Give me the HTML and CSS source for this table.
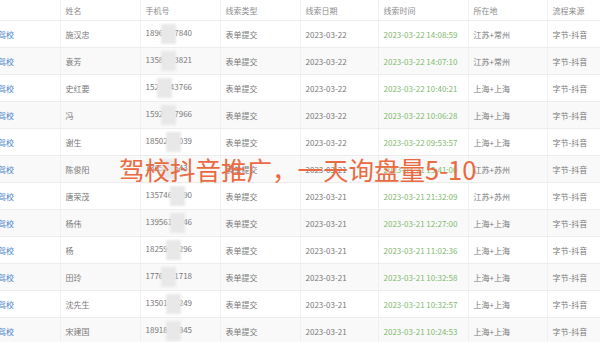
FILE: index.html
```html
<!DOCTYPE html>
<html lang="zh">
<head>
<meta charset="utf-8">
<link rel="stylesheet" href="styles.css">
</head>
<body>
<div class="page">
  <table class="grid">
    <colgroup>
      <col class="c-org"><col class="c-name"><col class="c-phone"><col class="c-type"><col class="c-date"><col class="c-time"><col class="c-loc"><col class="c-src">
    </colgroup>
    <thead>
      <tr><th></th><th>姓名</th><th>手机号</th><th>线索类型</th><th>线索日期</th><th>线索时间</th><th>所在地</th><th>流程来源</th></tr>
    </thead>
    <tbody>
      <tr><td class="org">驾校</td><td>施汉忠</td><td>1896<span class="mask"></span>7840</td><td>表单提交</td><td>2023-03-22</td><td class="time">2023-03-22 14:08:59</td><td>江苏+常州</td><td>字节-抖音</td></tr>
      <tr><td class="org">驾校</td><td>袁芳</td><td>1358<span class="mask"></span>3821</td><td>表单提交</td><td>2023-03-22</td><td class="time">2023-03-22 14:07:10</td><td>江苏+常州</td><td>字节-抖音</td></tr>
      <tr><td class="org">驾校</td><td>史红要</td><td>152<span class="mask"></span>43766</td><td>表单提交</td><td>2023-03-22</td><td class="time">2023-03-22 10:40:21</td><td>上海+上海</td><td>字节-抖音</td></tr>
      <tr><td class="org">驾校</td><td>冯</td><td>1592<span class="mask"></span>7966</td><td>表单提交</td><td>2023-03-22</td><td class="time">2023-03-22 10:06:28</td><td>上海+上海</td><td>字节-抖音</td></tr>
      <tr><td class="org">驾校</td><td>谢生</td><td>18502<span class="mask"></span>039</td><td>表单提交</td><td>2023-03-22</td><td class="time">2023-03-22 09:53:57</td><td>上海+上海</td><td>字节-抖音</td></tr>
      <tr><td class="org">驾校</td><td>陈俊阳</td><td>1365<span class="mask"></span>543</td><td>表单提交</td><td>2023-03-21</td><td class="time">2023-03-21 15:41:00</td><td>江苏+苏州</td><td>字节-抖音</td></tr>
      <tr><td class="org">驾校</td><td>唐荣茂</td><td>135746<span class="mask"></span>90</td><td>表单提交</td><td>2023-03-21</td><td class="time">2023-03-21 21:32:09</td><td>江苏+苏州</td><td>字节-抖音</td></tr>
      <tr><td class="org">驾校</td><td>杨伟</td><td>139561<span class="mask"></span>46</td><td>表单提交</td><td>2023-03-21</td><td class="time">2023-03-21 12:27:00</td><td>上海+上海</td><td>字节-抖音</td></tr>
      <tr><td class="org">驾校</td><td>杨</td><td>18259<span class="mask"></span>296</td><td>表单提交</td><td>2023-03-21</td><td class="time">2023-03-21 11:02:36</td><td>上海+上海</td><td>字节-抖音</td></tr>
      <tr><td class="org">驾校</td><td>田玲</td><td>1776<span class="mask"></span>1718</td><td>表单提交</td><td>2023-03-21</td><td class="time">2023-03-21 10:32:58</td><td>上海+上海</td><td>字节-抖音</td></tr>
      <tr><td class="org">驾校</td><td>沈先生</td><td>13501<span class="mask"></span>249</td><td>表单提交</td><td>2023-03-21</td><td class="time">2023-03-21 10:32:57</td><td>上海+上海</td><td>字节-抖音</td></tr>
      <tr><td class="org">驾校</td><td>宋建国</td><td>18918<span class="mask"></span>845</td><td>表单提交</td><td>2023-03-21</td><td class="time">2023-03-21 10:24:53</td><td>上海+上海</td><td>字节-抖音</td></tr>
    </tbody>
  </table>
  <div class="caption">驾校抖音推广，一天询盘量5-10</div>
</div>
</body>
</html>
```

FILE: styles.css
```css
html, body {
  margin: 0;
  padding: 0;
  background: #ffffff;
}
.page {
  position: relative;
  width: 600px;
  height: 342px;
  overflow: hidden;
  font-family: "Noto Sans CJK SC", "Noto Sans", sans-serif;
}
.grid {
  border-collapse: collapse;
  table-layout: fixed;
  width: 640px;
  font-size: 8px;
  color: #787878;
}
.c-org { width: 60px; }
.c-name { width: 80px; }
.c-phone { width: 80px; }
.c-type { width: 80px; }
.c-date { width: 78px; }
.c-time { width: 90px; }
.c-loc { width: 79px; }
.c-src { width: 93px; }
.grid th {
  height: 20px;
  padding: 0 0 0 5px;
  font-weight: normal;
  text-align: left;
  color: #8c8c8c;
  border-bottom: 1px solid #ececec;
  border-left: 1px solid #f0f0f0;
}
.grid td {
  height: 26px;
  padding: 0 0 0 5px;
  white-space: nowrap;
  overflow: hidden;
  border-bottom: 1px solid #ececec;
  border-left: 1px solid #f0f0f0;
}
.grid th:first-child, .grid td:first-child {
  border-left: none;
}
.grid tbody tr:nth-child(even) td {
  background: #f9f9f9;
}
.grid td.org {
  padding-left: 0;
  text-indent: -2px;
  color: #4a83c9;
}
.grid td.time {
  color: #80b96e;
}
.mask {
  display: inline-block;
  width: 15px;
  height: 20px;
  margin: 0 -2px;
  vertical-align: middle;
  background: #e8e8e8;
  filter: blur(1px);
}
.caption {
  position: absolute;
  left: 119px;
  top: 152px;
  font-size: 25.5px;
  line-height: 34px;
  color: #ea6a42;
  white-space: nowrap;
}
```
